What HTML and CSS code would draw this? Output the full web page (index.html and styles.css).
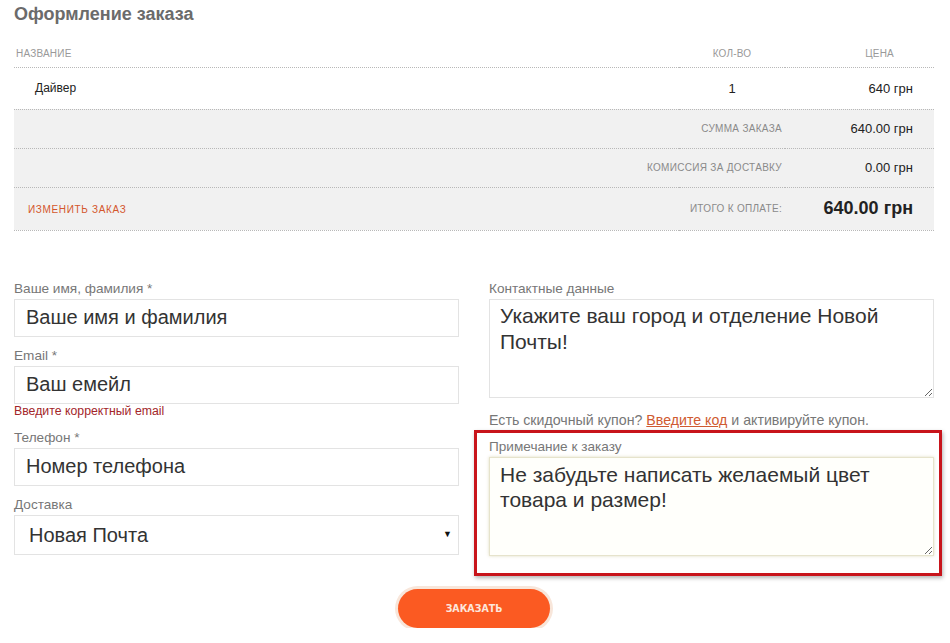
FILE: index.html
```html
<!DOCTYPE html>
<html lang="ru">
  <head>
    <meta charset="UTF-8" />
    <title>Оформление заказа</title>
    <link rel="stylesheet" href="styles.css">
  </head>
  <body>
    <div class="page">
      <h1 class="title">Оформление заказа</h1>

      <table class="cart">
        <colgroup>
          <col />
          <col class="col-qty" />
          <col class="col-price" />
        </colgroup>
        <thead>
          <tr>
            <th class="c-name">Название</th>
            <th class="c-qty">Кол-во</th>
            <th class="c-price">Цена</th>
          </tr>
        </thead>
        <tbody>
          <tr class="item">
            <td class="c-name">Дайвер</td>
            <td class="c-qty">1</td>
            <td class="c-price">640 грн</td>
          </tr>
          <tr class="sum">
            <td class="c-label" colspan="2">Сумма заказа</td>
            <td class="c-price">640.00 грн</td>
          </tr>
          <tr class="sum">
            <td class="c-label" colspan="2">Комиссия за доставку</td>
            <td class="c-price">0.00 грн</td>
          </tr>
          <tr class="sum total">
            <td class="c-edit"><a href="javascript:;" class="edit">Изменить заказ</a></td>
            <td class="c-label">Итого к оплате:</td>
            <td class="c-price">640.00 грн</td>
          </tr>
        </tbody>
      </table>

      <form class="order-form" action="javascript:;">
        <div class="col">
          <div class="field">
            <label>Ваше имя, фамилия *</label>
            <input class="input" type="text" placeholder="Ваше имя и фамилия" />
          </div>
          <div class="field">
            <label>Email *</label>
            <input class="input" type="text" placeholder="Ваш емейл" />
            <div class="error">Введите корректный email</div>
          </div>
          <div class="field">
            <label>Телефон *</label>
            <input class="input" type="text" placeholder="Номер телефона" />
          </div>
          <div class="field">
            <label>Доставка</label>
            <div class="select-wrap">
              <select class="input select">
                <option>Новая Почта</option>
              </select>
            </div>
          </div>
        </div>

        <div class="col">
          <div class="field">
            <label>Контактные данные</label>
            <textarea class="input area">Укажите ваш город и отделение Новой Почты!</textarea>
          </div>
          <p class="coupon">Есть скидочный купон? <a href="javascript:;">Введите код</a> и активируйте купон.</p>
          <div class="note-box">
            <div class="field">
              <label>Примечание к заказу</label>
              <textarea class="input area focus">Не забудьте написать желаемый цвет товара и размер! </textarea>
            </div>
          </div>
        </div>
      </form>

      <div class="submit-row">
        <button class="submit" type="button">Заказать</button>
      </div>
    </div>
  </body>
</html>
```

FILE: styles.css
```css
* {
  margin: 0px;
  padding: 0px;
  box-sizing: border-box;
}
body {
  font-family: "Liberation Sans", Arial, sans-serif;
  color: #333;
  background: #fff;
}
.page {
  width: 920px;
  margin-left: 14px;
}
.title {
  padding-top: 4px;
  font-size: 18px;
  line-height: 20px;
  font-weight: bold;
  color: #6b6b6b;
}

/* корзина */
.cart {
  width: 100%;
  margin-top: 16px;
  border-collapse: collapse;
  table-layout: fixed;
}
.col-qty {
  width: 106px;
}
.col-price {
  width: 149px;
}
.cart th,
.cart td {
  border-bottom: 1px dotted #b8b8b8;
  vertical-align: middle;
  white-space: nowrap;
}
.cart th {
  height: 27px;
  font-size: 10px;
  font-weight: normal;
  text-transform: uppercase;
  letter-spacing: 0.2px;
  color: #999;
}
.cart th.c-name {
  text-align: left;
  padding-left: 2px;
}
.cart th.c-qty {
  text-align: center;
}
.cart th.c-price {
  text-align: right;
  padding-right: 40px;
}
.item td {
  height: 42px;
  font-size: 13px;
  color: #222;
}
.item .c-name {
  padding-left: 21px;
  font-size: 12px;
}
.c-qty {
  text-align: center;
}
.cart td.c-price {
  text-align: right;
  padding-right: 21px;
}
.sum td {
  height: 39px;
  background-color: #f1f1f1;
  font-size: 13px;
  color: #222;
}
.cart td.c-label {
  text-align: right;
  padding-right: 3px;
  font-size: 10px;
  letter-spacing: 0.3px;
  text-transform: uppercase;
  color: #8a8a8a;
}
.total td {
  height: 43px;
}
.total td.c-price {
  font-size: 18px;
  font-weight: bold;
}
.c-edit {
  padding-left: 14px;
}
.edit {
  font-size: 10px;
  letter-spacing: 0.65px;
  text-transform: uppercase;
  color: #d4562c;
  text-decoration: none;
}

/* форма */
.order-form {
  display: grid;
  grid-template-columns: 1fr 1fr;
  column-gap: 30px;
  align-items: start;
  margin-top: 50px;
}
.field + .field {
  margin-top: 11px;
}
.field label {
  display: block;
  margin-bottom: 2px;
  font-size: 13.6px;
  line-height: 16px;
  color: #777;
}
.input {
  display: block;
  width: 100%;
  height: 38px;
  padding: 0 11px;
  border: 1px solid #e3e3e3;
  background: #fff;
  font-family: "Liberation Sans", Arial, sans-serif;
  font-size: 20px;
  color: #333;
  outline: none;
}
.input::placeholder {
  color: #333;
  opacity: 1;
}
.error {
  font-size: 12.3px;
  line-height: 14px;
  color: #a3262a;
}
.field:has(.error) + .field {
  margin-top: 12px;
}
.select-wrap {
  position: relative;
}
.select {
  height: 40px;
  padding-left: 14px;
  -webkit-appearance: none;
  appearance: none;
  border-radius: 0;
}
.select-wrap::after {
  content: "\25BC";
  position: absolute;
  right: 7px;
  top: 14px;
  font-size: 9px;
  color: #111;
  pointer-events: none;
}
.area {
  height: 99px;
  padding: 3px 10px;
  font-size: 21px;
  line-height: 26px;
  resize: vertical;
}
.coupon {
  margin-top: 14px;
  font-size: 14.2px;
  line-height: 16px;
  color: #777;
}
.coupon a {
  color: #cf5a31;
}

/* выделенный блок примечания */
.note-box {
  margin: 2px -8px 0 -15px;
  padding: 6px 5px 17px 12px;
  border: 3px solid #c8141b;
  box-shadow: 1px 2px 4px rgba(0, 0, 0, 0.3);
}
.area.focus {
  padding-top: 4px;
  line-height: 25px;
  background: #fffffb;
  border-color: #e6e3cc;
  box-shadow: 0 0 3px rgba(190, 180, 120, 0.45);
}

.submit-row {
  margin-top: 13px;
  text-align: center;
}
.submit {
  width: 152px;
  height: 39px;
  border: none;
  border-radius: 20px;
  background-color: #fb5a22;
  box-shadow: 0 0 0 3px #f8e6da;
  font-family: "DejaVu Sans Condensed", "DejaVu Sans", sans-serif;
  font-size: 10.5px;
  font-weight: bold;
  text-transform: uppercase;
  color: #fde6dc;
  cursor: pointer;
}
```
